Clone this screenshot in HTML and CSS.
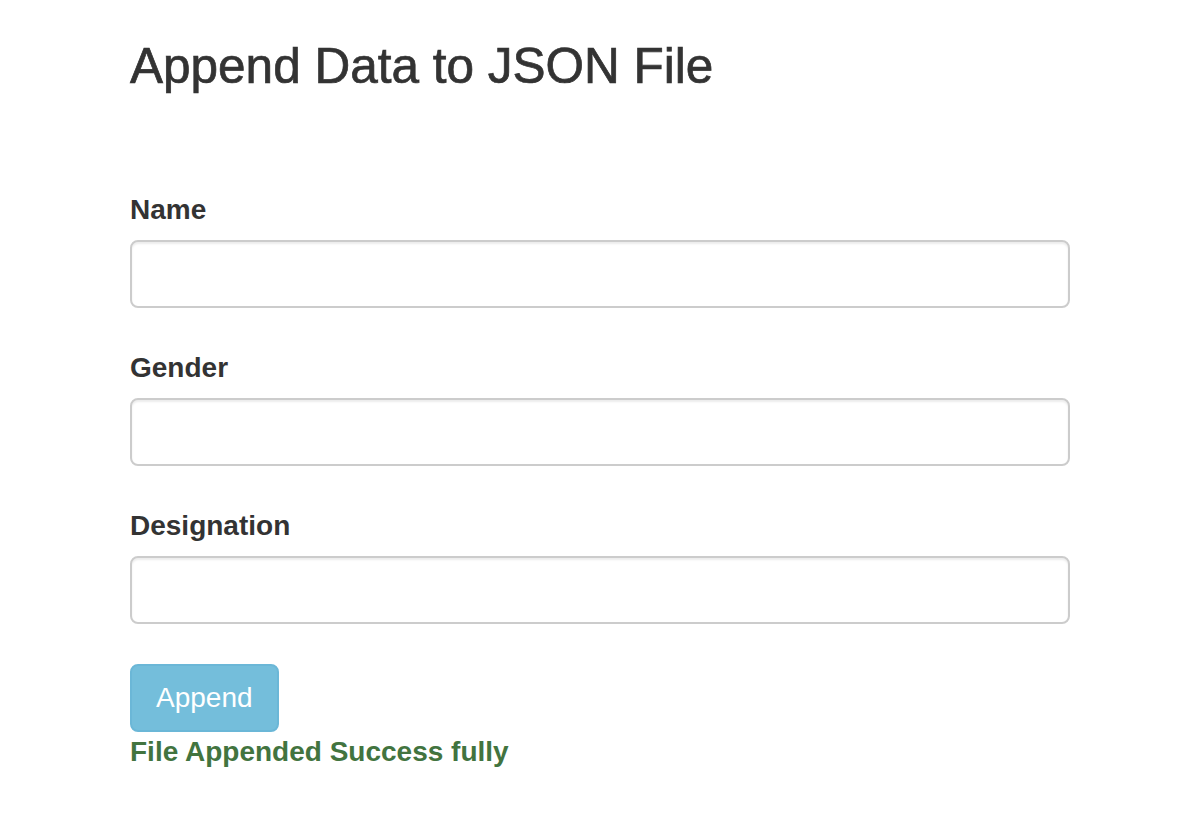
FILE: index.html
```html
<!DOCTYPE html>
<html>
<head>
<meta charset="utf-8">
<title>Append Data to JSON File</title>
<link rel="stylesheet" href="styles.css">
</head>
<body>
<div class="container">
  <h3 class="title">Append Data to JSON File</h3>
  <form class="form">
    <div class="form-group">
      <label class="label">Name</label>
      <input class="form-control" type="text">
    </div>
    <div class="form-group">
      <label class="label">Gender</label>
      <input class="form-control" type="text">
    </div>
    <div class="form-group">
      <label class="label">Designation</label>
      <input class="form-control" type="text">
    </div>
    <button class="btn" type="button">Append</button>
    <div class="success">File Appended Success fully</div>
  </form>
</div>
</body>
</html>
```
FILE: styles.css
```css
html, body {
  margin: 0;
  padding: 0;
  background: #fff;
}
body {
  font-family: "Liberation Sans", Arial, Helvetica, sans-serif;
  font-size: 28px;
  line-height: 40px;
  color: #333;
}
.container {
  width: 940px;
  margin-left: 130px;
}
.title {
  font-size: 49.5px;
  font-weight: normal;
  line-height: 52px;
  margin: 40px 0 0 0;
  color: #333;
  -webkit-text-stroke: 0.7px #333;
}
.form {
  display: flex;
  flex-direction: column;
  align-items: flex-start;
  padding-top: 98px;
}
.form-group {
  display: flex;
  flex-direction: column;
  width: 100%;
  margin-bottom: 40px;
}
.label {
  display: block;
  font-weight: bold;
  margin-bottom: 10px;
}
.form-control {
  box-sizing: border-box;
  width: 100%;
  height: 68px;
  margin: 0;
  padding: 12px 24px;
  border: 2px solid #ccc;
  border-radius: 8px;
  box-shadow: inset 0 2px 2px rgba(0, 0, 0, 0.075);
  background: #fff;
  font: inherit;
}
.btn {
  box-sizing: border-box;
  height: 68px;
  padding: 0 24px;
  margin: 0;
  font: inherit;
  color: #fff;
  background: #74bedb;
  border: 2px solid #6bb7d7;
  border-radius: 8px;
}
.success {
  font-weight: bold;
  color: #42743f;
}
```
